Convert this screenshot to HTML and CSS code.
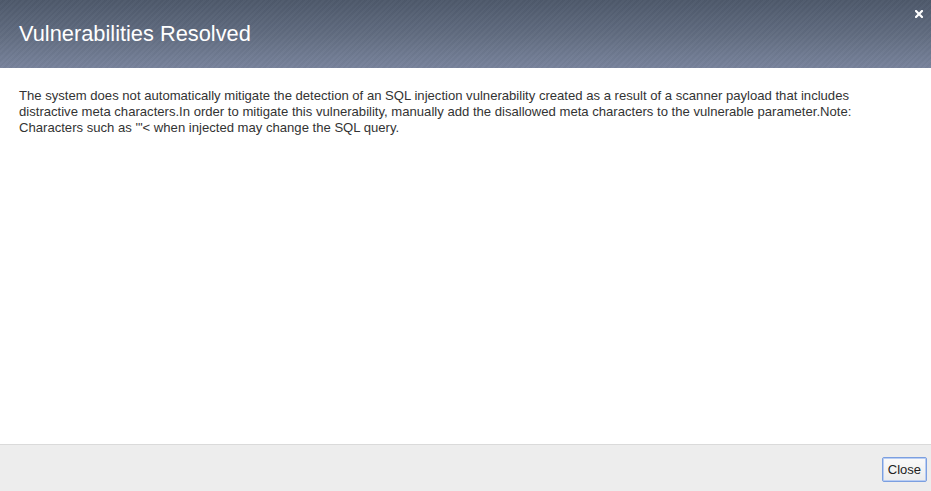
FILE: index.html
```html
<!DOCTYPE html>
<html>
<head>
<meta charset="utf-8">
<link rel="stylesheet" href="styles.css">
</head>
<body>
<div class="dialog">
  <div class="header">
    <h1 class="title">Vulnerabilities Resolved</h1>
    <span class="close-x" aria-label="close">
      <svg width="8" height="8" viewBox="0 0 8 8"><path d="M1 1 L7 7 M7 1 L1 7" stroke="#fff" stroke-width="2.2" stroke-linecap="square"/></svg>
    </span>
  </div>
  <div class="content">
    <p class="text">The system does not automatically mitigate the detection of an SQL injection vulnerability created as a result of a scanner payload that includes distractive meta characters.In order to mitigate this vulnerability, manually add the disallowed meta characters to the vulnerable parameter.Note: Characters such as '"&lt; when injected may change the SQL query.</p>
  </div>
  <div class="footer">
    <button class="btn">Close</button>
  </div>
</div>
</body>
</html>
```
FILE: styles.css
```css
html, body {
  margin: 0;
  padding: 0;
  width: 931px;
  height: 491px;
  background: #fff;
  font-family: "Liberation Sans", Arial, sans-serif;
}
.dialog {
  display: flex;
  flex-direction: column;
  height: 491px;
}
.header {
  position: relative;
  height: 68px;
  display: flex;
  align-items: center;
  padding-left: 19px;
  box-sizing: border-box;
  background:
    repeating-linear-gradient(135deg, rgba(255,255,255,0.02) 0 2px, rgba(0,0,0,0.02) 2px 4px),
    linear-gradient(to bottom, #4e596b 0%, #616c80 50%, #78839c 100%);
}
.title {
  margin: 0;
  font-size: 21.8px;
  font-weight: normal;
  color: #fff;
  line-height: 26px;
  margin-top: 0;
}
.close-x {
  position: absolute;
  top: 10px;
  right: 8px;
  width: 8px;
  height: 8px;
  display: block;
}
.close-x svg { display: block; }
.content {
  flex: 1;
  padding: 20px 19px 0 19px;
}
.text {
  margin: 0;
  font-size: 13.1px;
  line-height: 16px;
  color: #333;
  max-width: 850px;
}
.footer {
  height: 47px;
  border-top: 1px solid #dadada;
  background: #ededed;
  display: flex;
  justify-content: flex-end;
  align-items: flex-start;
  padding: 12px 4px 0 0;
  box-sizing: border-box;
}
.btn {
  font-family: "Liberation Sans", Arial, sans-serif;
  font-size: 13px;
  color: #222;
  height: 25px;
  padding: 0 5px;
  border: 1px solid #7b9fe0;
  border-radius: 2px;
  box-shadow: 0 0 0 1px #b9cdf3 inset;
  background: linear-gradient(#fafafa, #ececec);
}
```
